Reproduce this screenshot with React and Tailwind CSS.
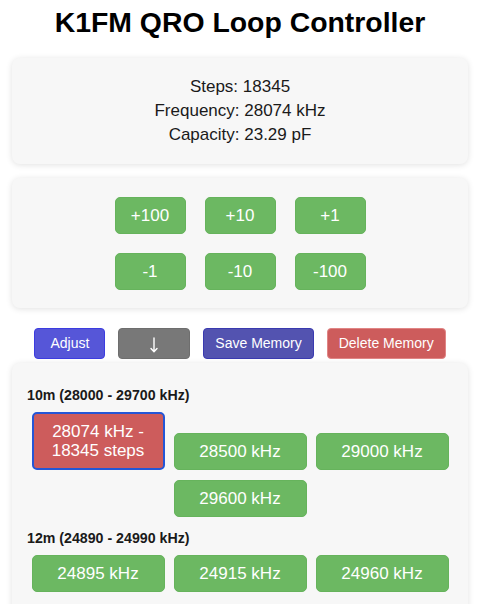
import React from "react";

const green =
  "bg-[#6cb862] border border-[#66b35c] text-white rounded-[5px]";

function KeyBtn({ label }) {
  return (
    <button
      className={`${green} w-[71px] h-[37px] text-[17px] leading-[19px] flex items-center justify-center`}
    >
      {label}
    </button>
  );
}

function MemBtn({ children, active }) {
  if (active) {
    return (
      <button className="w-[133px] bg-[#cd5c5c] border-2 border-[#2456d6] rounded-[5px] text-white text-[17px] leading-[19px] py-[8px] text-center">
        {children}
      </button>
    );
  }
  return (
    <button
      className={`${green} w-[133px] text-[17px] leading-[19px] py-[8px] text-center`}
    >
      {children}
    </button>
  );
}

function Band({ title, children, className = "" }) {
  return (
    <div className={className}>
      <div className="text-[14.2px] leading-[16px] font-bold text-[#1a1a1a] mb-[9px]">
        {title}
      </div>
      <div className="flex flex-wrap justify-center items-end gap-x-[9px] gap-y-[10px]">
        {children}
      </div>
    </div>
  );
}

export default function App() {
  return (
    <div
      className="w-full min-h-[604px] bg-white"
      style={{ fontFamily: '"Liberation Sans", Arial, Helvetica, sans-serif' }}
    >
      <h1 className="pt-[6px] text-center font-bold text-[28.4px] leading-[33px] text-black">
        K1FM QRO Loop Controller
      </h1>

      <div className="px-[12px] mt-[19px]">
        <div className="rounded-[8px] bg-[#f7f7f7] shadow-[0_1px_6px_rgba(0,0,0,0.12)] pt-[17px] pb-[17px] text-center text-[17px] leading-[24px] text-[#1a1a1a]">
          <div>Steps: 18345</div>
          <div>Frequency: 28074 kHz</div>
          <div>Capacity: 23.29 pF</div>
        </div>

        <div className="mt-[14px] rounded-[8px] bg-[#f7f7f7] shadow-[0_1px_6px_rgba(0,0,0,0.12)] pt-[19px] pb-[18px] flex flex-col items-center gap-[19px]">
          <div className="flex gap-[19px]">
            <KeyBtn label="+100" />
            <KeyBtn label="+10" />
            <KeyBtn label="+1" />
          </div>
          <div className="flex gap-[19px]">
            <KeyBtn label="-1" />
            <KeyBtn label="-10" />
            <KeyBtn label="-100" />
          </div>
        </div>

        <div className="mt-[20px] flex justify-center gap-[13px] text-[14px] leading-[17px] text-white">
          <button className="min-w-[71px] px-[11px] py-[6px] rounded-[4px] bg-[#5656d8] border border-[#3c3ce0]">
            Adjust
          </button>
          <button
            aria-label="down"
            className="min-w-[72px] h-[31px] px-[11px] rounded-[4px] bg-[#787878] border border-[#6e6e6e] flex items-center justify-center"
          >
            <svg width="10" height="16" viewBox="0 0 10 16" className="mt-[2px]">
              <path
                d="M5 1 V14.5 M2 11.5 L5 14.8 L8 11.5"
                fill="none"
                stroke="white"
                strokeWidth="1.4"
                strokeLinecap="round"
                strokeLinejoin="round"
              />
            </svg>
          </button>
          <button className="px-[11px] py-[6px] rounded-[4px] bg-[#5353b0] border border-[#3a3ab0]">
            Save Memory
          </button>
          <button className="px-[11px] py-[6px] rounded-[4px] bg-[#cd5c5c] border border-[#e08585]">
            Delete Memory
          </button>
        </div>

        <div className="mt-[4px] rounded-[8px] bg-[#f7f7f7] shadow-[0_1px_6px_rgba(0,0,0,0.12)] pt-[24px] px-[15px] pb-[40px]">
          <Band title="10m (28000 - 29700 kHz)">
            <MemBtn active>
              28074 kHz -
              <br />
              18345 steps
            </MemBtn>
            <MemBtn>28500 kHz</MemBtn>
            <MemBtn>29000 kHz</MemBtn>
            <MemBtn>29600 kHz</MemBtn>
          </Band>
          <Band title="12m (24890 - 24990 kHz)" className="mt-[13px]">
            <MemBtn>24895 kHz</MemBtn>
            <MemBtn>24915 kHz</MemBtn>
            <MemBtn>24960 kHz</MemBtn>
          </Band>
        </div>
      </div>
    </div>
  );
}
